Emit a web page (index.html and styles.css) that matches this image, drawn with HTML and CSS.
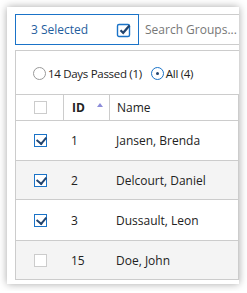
FILE: index.html
```html
<!DOCTYPE html>
<html lang="en">
<head>
    <meta charset="UTF-8">
    <title>Groups</title>
    <link rel="stylesheet" href="styles.css">
</head>
<body>
    <div class="card">
        <!-- Toolbar -->
        <div class="toolbar">
            <div class="selected">
                <span>3 Selected</span>
                <svg class="sel-icon" width="16" height="16" viewBox="0 0 16 16">
                    <rect x="1.5" y="2.5" width="12" height="12" rx="1.5" fill="none" stroke="#1a73c8" stroke-width="1.4"/>
                    <path d="M4.5 8.2 L7.2 10.8 L13.5 3.5" fill="none" stroke="#22446e" stroke-width="2.2"/>
                </svg>
            </div>
            <div class="search">Search Groups...</div>
        </div>

        <!-- Filter -->
        <div class="filter">
            <span class="radio"></span>
            <span class="radio-label">14 Days Passed (1)</span>
            <span class="radio on"></span>
            <span class="radio-label">All (4)</span>
        </div>

        <!-- Table -->
        <div class="table">
            <div class="row head">
                <div class="cell check"><span class="box"></span></div>
                <div class="cell id">ID <span class="sort"></span></div>
                <div class="cell name">Name</div>
            </div>
            <div class="row tall">
                <div class="cell check"><span class="box on"></span></div>
                <div class="cell id">1</div>
                <div class="cell name">Jansen, Brenda</div>
            </div>
            <div class="row alt">
                <div class="cell check"><span class="box on"></span></div>
                <div class="cell id">2</div>
                <div class="cell name">Delcourt, Daniel</div>
            </div>
            <div class="row tall">
                <div class="cell check"><span class="box on"></span></div>
                <div class="cell id">3</div>
                <div class="cell name">Dussault, Leon</div>
            </div>
            <div class="row alt">
                <div class="cell check"><span class="box"></span></div>
                <div class="cell id">15</div>
                <div class="cell name">Doe, John</div>
            </div>
        </div>
    </div>
</body>
</html>
```
FILE: styles.css
```css
:root {
    --blue: #1a73c8;
    --navy: #22446e;
    --line: #cccccc;
    --text: #222;
}

body {
    margin: 0;
    background: #fff;
    font-family: "Open Sans", Arial, sans-serif;
    font-size: 12px;
    color: var(--text);
}

.card {
    box-sizing: border-box;
    width: 232px;
    height: 277px;
    margin: 7px;
    padding: 7px 0 0 8px;
    background: #fff;
    box-shadow: 0 0 8px rgba(0, 0, 0, 0.35);
    overflow: hidden;
}

/* Toolbar */
.toolbar {
    display: flex;
    height: 31px;
    margin-bottom: 5px;
}

.selected {
    box-sizing: border-box;
    width: 124px;
    border: 1px solid var(--blue);
    display: flex;
    align-items: center;
    justify-content: space-between;
    padding: 0 6px 0 15px;
    color: #1f5e9e;
}

.sel-icon {
    display: block;
}

.search {
    flex: 1;
    box-sizing: border-box;
    border-top: 1px solid var(--line);
    border-bottom: 1px solid var(--line);
    display: flex;
    align-items: center;
    padding-left: 6px;
    color: #777;
}

/* Filter */
.filter {
    box-sizing: border-box;
    height: 44px;
    border-top: 1px solid var(--line);
    border-left: 1px solid var(--line);
    display: flex;
    align-items: center;
    padding: 2px 0 0 17px;
    font-size: 11.5px;
    letter-spacing: -0.3px;
}

.radio {
    box-sizing: border-box;
    width: 13px;
    height: 13px;
    border: 1px solid #999;
    border-radius: 50%;
    margin-right: 2px;
    position: relative;
}

.radio.on {
    border-color: var(--blue);
    margin-left: 9px;
}

.radio.on::after {
    content: "";
    position: absolute;
    left: 4px;
    top: 4px;
    width: 3px;
    height: 3px;
    border-radius: 50%;
    background: var(--navy);
}

/* Table */
.table {
    border-left: 1px solid var(--line);
    border-right: 1px solid var(--line);
}

.row {
    box-sizing: border-box;
    display: flex;
    height: 39px;
    border-top: 1px solid var(--line);
}

.row.tall {
    height: 40px;
}

.row.alt {
    background: #f4f4f4;
    border-bottom: 1px solid var(--line);
    height: 40px;
}

.row.alt + .row {
    border-top: none;
}

.row.head {
    height: 26px;
}

.cell {
    display: flex;
    align-items: center;
}

.check {
    width: 46px;
    justify-content: center;
    padding-left: 1px;
}

.id {
    width: 46px;
    padding-left: 8px;
    box-sizing: border-box;
}

.name {
    padding-left: 7px;
}

.head .check,
.head .id {
    border-right: 1px solid var(--line);
}

.head .id {
    font-weight: 700;
    justify-content: space-between;
    padding-right: 6px;
}

.sort {
    width: 0;
    height: 0;
    border-left: 3px solid transparent;
    border-right: 3px solid transparent;
    border-bottom: 4px solid #8c8cd9;
    margin-top: -5px;
}

.box {
    box-sizing: border-box;
    width: 13px;
    height: 13px;
    border: 1px solid var(--line);
    background: #fff;
    position: relative;
}

.box.on {
    border-color: var(--blue);
}

.box.on::after {
    content: "";
    position: absolute;
    left: 3px;
    top: 0;
    width: 5px;
    height: 7px;
    border-right: 2px solid var(--navy);
    border-bottom: 2px solid var(--navy);
    transform: rotate(40deg);
}
```
